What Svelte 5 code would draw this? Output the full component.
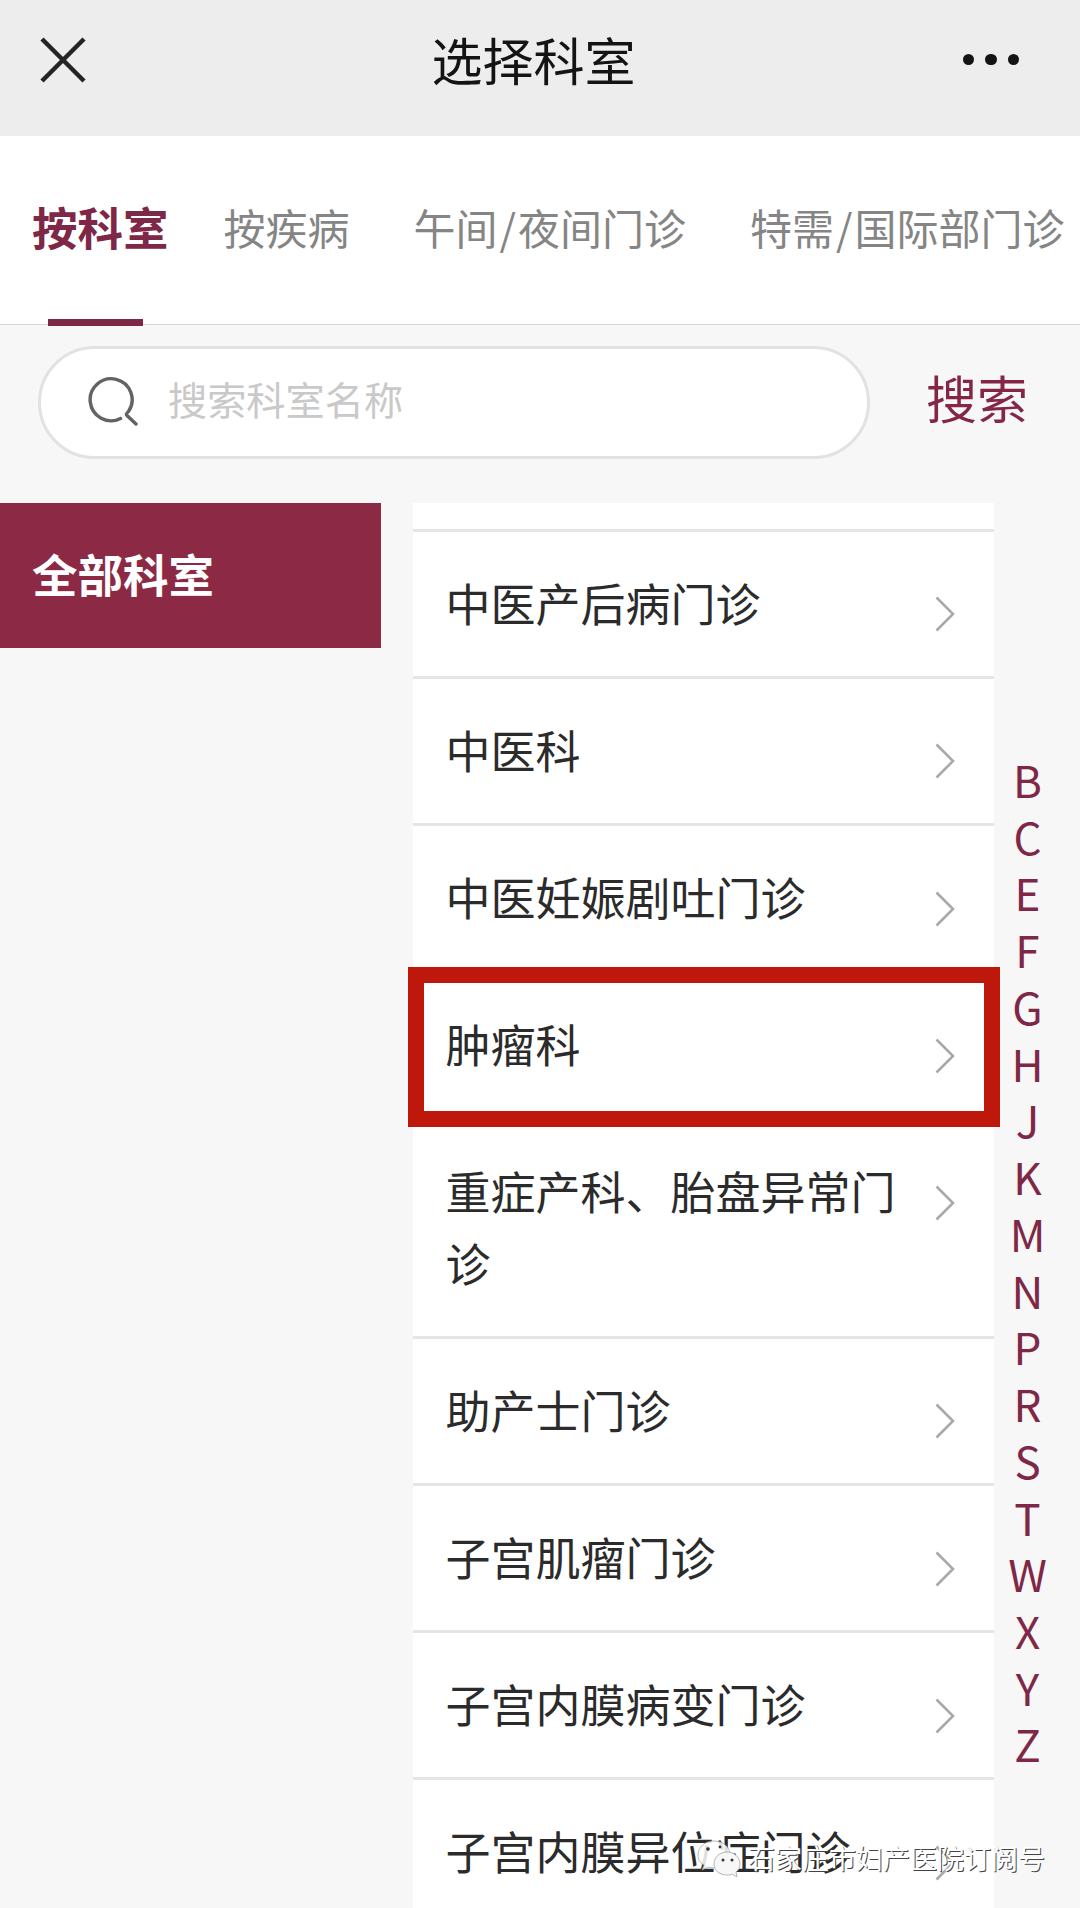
<script lang="ts">
    let active = 0

    const tabs = ['按科室', '按疾病', '午间/夜间门诊', '特需/国际部门诊']

    const departments = [
        { name: '中医产后病门诊' },
        { name: '中医科' },
        { name: '中医妊娠剧吐门诊' },
        { name: '肿瘤科', marked: true },
        { name: '重症产科、胎盘异常门诊' },
        { name: '助产士门诊' },
        { name: '子宫肌瘤门诊' },
        { name: '子宫内膜病变门诊' },
        { name: '子宫内膜异位症门诊' }
    ]

    const letters = 'BCEFGHJKMNPRSTWXYZ'.split('')
</script>

<div class="page">
    <header>
        <button class="close" aria-label="关闭">
            <svg width="46" height="46" viewBox="0 0 46 46"><path d="M2 2L44 44M44 2L2 44" /></svg>
        </button>
        <h1>选择科室</h1>
        <button class="more" aria-label="更多"><i></i><i></i><i></i></button>
    </header>

    <nav>
        {#each tabs as tab, i}
            <button class="tab {i === active ? 'active' : ''}" on:click={() => active = i}>
                {#each tab.split('/') as part, j}{#if j}<span class="slash">/</span>{/if}{part}{/each}
            </button>
        {/each}
    </nav>

    <form class="search" on:submit|preventDefault>
        <div class="field">
            <svg width="52" height="52" viewBox="0 0 52 52">
                <path d="M33.5 43.5A21 21 0 1 1 41.5 36.5Q38.5 39 40 40.5L49 49" />
            </svg>
            <input type="text" placeholder="搜索科室名称">
        </div>
        <button class="submit">搜索</button>
    </form>

    <main>
        <aside>
            <button class="group">全部科室</button>
        </aside>

        <ul class="list">
            <li class="stub"></li>
            {#each departments as department}
                <li class="row {department.marked ? 'marked' : ''}">
                    <span>{department.name}</span>
                    <svg width="20" height="36" viewBox="0 0 20 36"><path d="M1.5 1.5L18 18L1.5 34.5" /></svg>
                </li>
            {/each}
        </ul>

        <div class="index">
            {#each letters as letter}
                <span>{letter}</span>
            {/each}
        </div>
    </main>

    <div class="account">
        <svg width="44" height="38" viewBox="0 0 44 38">
            <path class="bubble" d="M17 2C8 2 1 8 1 16c0 4 2 8 6 10l-2 5 6-3c9 3 22-2 22-12C33 8 26 2 17 2z" />
            <circle class="eye" cx="11" cy="10" r="1.8" />
            <circle class="eye" cx="23" cy="8" r="1.4" />
            <path class="bubble front" d="M30 13c-7 0-13 5-13 12s6 11 13 11c2 0 4 0 5-1l5 3-1-5c3-2 4-5 4-8 0-7-6-12-13-12z" />
            <circle class="eye" cx="26" cy="21" r="1.5" />
            <circle class="eye" cx="35" cy="21" r="1.5" />
        </svg>
        <span>石家庄市妇产医院订阅号</span>
    </div>
</div>

<style>
:global(body) {
    background: #f7f7f7;
}

.page {
    position: relative;
    display: flex;
    flex-direction: column;
    width: 1080px;
    height: 1908px;
    overflow: hidden;
    background: #f7f7f7;
    color: #2b2b2b;
    font-family: "Noto Sans CJK SC", sans-serif;
}

button {
    padding: 0;
    border: none;
    background: transparent;
    font: inherit;
    white-space: nowrap;
}

svg {
    display: block;
    flex: none;
    fill: none;
}

header {
    display: grid;
    grid-template-columns: 200px 1fr 200px;
    align-items: center;
    box-sizing: border-box;
    height: 136px;
    padding: 0 61px 17px 40px;
    background: #ededed;
}

.close svg {
    stroke: #242424;
    stroke-width: 4.5;
}

h1 {
    margin: -2px 0 0 8px;
    color: #141414;
    font-size: 51px;
    font-weight: 400;
    line-height: 74px;
    text-align: center;
}

.more {
    display: flex;
    justify-content: flex-end;
    gap: 11px;
}

.more i {
    width: 11.5px;
    height: 11.5px;
    border-radius: 50%;
    background: #141414;
}

nav {
    display: flex;
    gap: 64px;
    box-sizing: border-box;
    height: 189px;
    padding-left: 32px;
    border-bottom: 1px solid #d6d6d6;
    background: white;
}

.tab {
    position: relative;
    height: 188px;
    padding-bottom: 8px;
    color: #858585;
    font-size: 42px;
}

.tab.active {
    margin-right: -9px;
    color: #7f2746;
    font-size: 45.5px;
    font-weight: 700;
}

.tab.active::after {
    content: "";
    position: absolute;
    left: 16px;
    bottom: -2px;
    width: 95px;
    height: 7px;
    background: #7f2746;
}

.slash {
    padding: 0 2px;
}

.search {
    display: flex;
    align-items: flex-start;
    box-sizing: border-box;
    height: 178px;
    padding: 20.5px 0 0 38px;
}

.field {
    display: flex;
    align-items: center;
    box-sizing: border-box;
    width: 832px;
    height: 113px;
    padding: 0 0 2px 46px;
    border: 3px solid #e2e2e2;
    border-radius: 57px;
    background: white;
}

.field svg {
    stroke: #636363;
    stroke-width: 3.4;
    stroke-linecap: round;
}

input {
    flex: 1;
    margin-left: 29px;
    padding: 0 0 6px;
    border: none;
    background: transparent;
    font: inherit;
    font-size: 39.2px;
}

input::placeholder {
    color: #c9c9c9;
}

.submit {
    margin: 14px 0 0 56px;
    color: #842647;
    font-size: 51px;
    line-height: 74px;
}

main {
    display: grid;
    grid-template-columns: 381px 613px 67px;
    height: 1405px;
}

.group {
    width: 381px;
    height: 145px;
    padding: 0 0 5px 32px;
    background: #8c2945;
    color: white;
    font-size: 45.5px;
    font-weight: 700;
    text-align: left;
}

.list {
    width: 581px;
    margin: 0 0 0 32px;
    padding: 0;
    list-style: none;
}

.stub {
    box-sizing: border-box;
    height: 28.6px;
    border-bottom: 3px solid #e5e5e5;
    background: white;
}

.row {
    position: relative;
    display: flex;
    align-items: flex-start;
    justify-content: space-between;
    padding: 35px 39px 38px 32.5px;
    border-bottom: 3px solid #e5e5e5;
    background: white;
    font-size: 45px;
    line-height: 71.2px;
}

.row span {
    width: 460px;
}

.row svg {
    margin-top: 29.5px;
    stroke: #a9a9a9;
    stroke-width: 2.6;
}

.marked::after {
    content: "";
    position: absolute;
    z-index: 1;
    top: -6px;
    right: -6px;
    bottom: -10px;
    left: -5px;
    border: 16px solid #bd180b;
}

.index {
    display: flex;
    flex-direction: column;
    padding-top: 248px;
    color: #7f2746;
    font-size: 44px;
    line-height: 56.73px;
    text-align: center;
}

.account {
    position: absolute;
    z-index: 2;
    top: 1837px;
    left: 697px;
    display: flex;
    align-items: center;
    gap: 7px;
    color: white;
    font-size: 27px;
    line-height: 42px;
    text-shadow: 1px 1px 0 #444;
    white-space: nowrap;
}

.bubble {
    fill: rgba(255, 255, 255, 0.85);
    stroke: #9a9a9a;
    stroke-width: 0.7;
}

.front {
    fill: #f7f7f7;
}

.eye {
    fill: #333;
}
</style>
